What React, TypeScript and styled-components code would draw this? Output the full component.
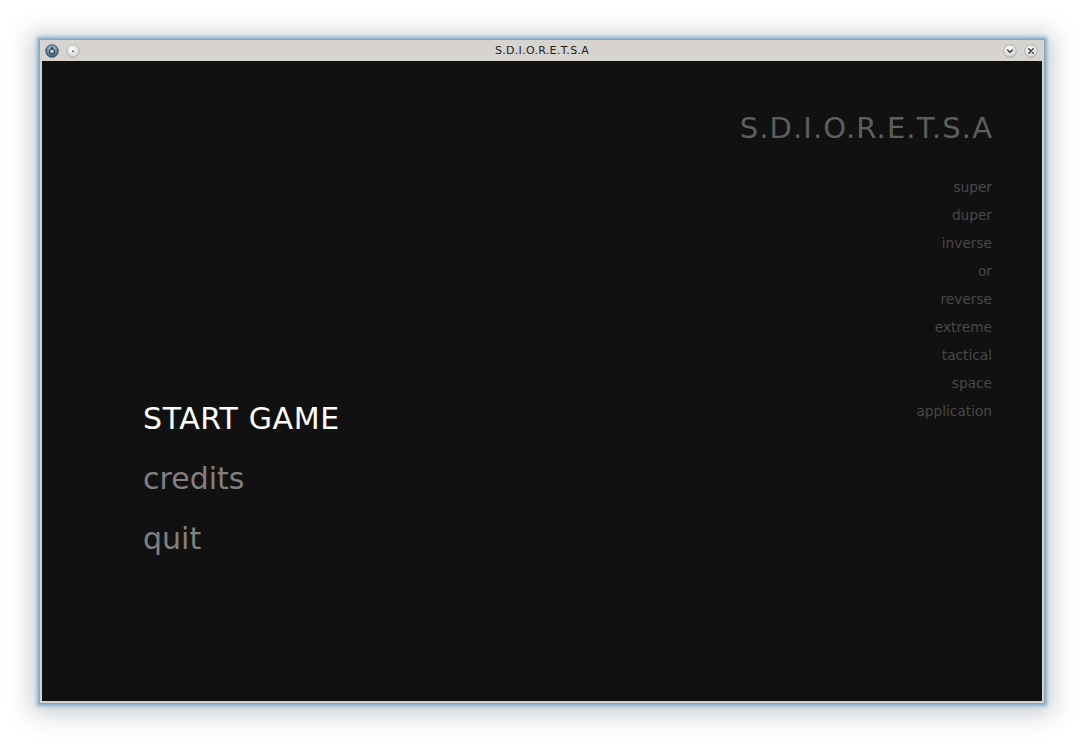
import * as React from 'react';
import styled, { createGlobalStyle } from 'styled-components';

const GlobalStyle = createGlobalStyle`
  html, body {
    margin: 0;
    padding: 0;
    background: #ffffff;
  }
  body {
    font-family: "DejaVu Sans", "Noto Sans", sans-serif;
  }
`;

const subtitleWords = ['super', 'duper', 'inverse', 'or', 'reverse', 'extreme', 'tactical', 'space', 'application'];

const menuItems = [
  { label: 'START GAME', active: true },
  { label: 'credits', active: false },
  { label: 'quit', active: false },
];

const ButtonGradient = () => (
  <defs>
    <radialGradient id="btnGrad" cx="45%" cy="35%" r="70%">
      <stop offset="0%" stopColor="#fbfbfb" />
      <stop offset="70%" stopColor="#dcdcdc" />
      <stop offset="100%" stopColor="#b9b9b9" />
    </radialGradient>
    <radialGradient id="appGrad" cx="50%" cy="40%" r="60%">
      <stop offset="0%" stopColor="#e8eef4" />
      <stop offset="45%" stopColor="#8fa9c2" />
      <stop offset="100%" stopColor="#2e4c6c" />
    </radialGradient>
  </defs>
);

const AppIcon = () => (
  <svg width="14" height="14" viewBox="0 0 14 14">
    <ButtonGradient />
    <circle cx="7" cy="7" r="6.3" fill="url(#appGrad)" stroke="#33506e" strokeWidth="0.8" />
    <circle cx="7" cy="7.6" r="2.6" fill="none" stroke="#3a3f46" strokeWidth="1.2" />
    <rect x="5.6" y="3.3" width="2.8" height="2.2" rx="0.6" fill="#3a3f46" />
  </svg>
);

const RoundButton = ({ glyph }: { glyph: 'dot' | 'down' | 'close' }) => (
  <svg width="14" height="14" viewBox="0 0 14 14">
    <circle cx="7" cy="7" r="6.3" fill="url(#btnGrad)" stroke="#a9a9a9" strokeWidth="0.8" />
    {glyph === 'dot' && <circle cx="7" cy="7.3" r="1" fill="#555" />}
    {glyph === 'down' && (
      <path d="M4.6 6 L7 8.4 L9.4 6" fill="none" stroke="#333" strokeWidth="1.3" strokeLinecap="round" />
    )}
    {glyph === 'close' && (
      <path d="M4.8 4.8 L9.2 9.2 M9.2 4.8 L4.8 9.2" fill="none" stroke="#333" strokeWidth="1.3" strokeLinecap="round" />
    )}
  </svg>
);

export default function App() {
  return (
    <>
      <GlobalStyle />
      <Desktop>
        <Window>
          <TitleBar>
            <ButtonGroup>
              <AppIcon />
              <RoundButton glyph="dot" />
            </ButtonGroup>
            <WindowTitle>S.D.I.O.R.E.T.S.A</WindowTitle>
            <ButtonGroup>
              <RoundButton glyph="down" />
              <RoundButton glyph="close" />
            </ButtonGroup>
          </TitleBar>
          <GameArea>
            <Menu>
              {menuItems.map((item) => (
                <MenuItem key={item.label} active={item.active}>
                  {item.label}
                </MenuItem>
              ))}
            </Menu>
            <Branding>
              <GameTitle>S.D.I.O.R.E.T.S.A</GameTitle>
              <WordList>
                {subtitleWords.map((w) => (
                  <Word key={w}>{w}</Word>
                ))}
              </WordList>
            </Branding>
          </GameArea>
        </Window>
      </Desktop>
    </>
  );
}

const Desktop = styled.div`
  padding: 39px;
  background: #ffffff;
  min-height: 745px;
  box-sizing: border-box;
`;

const Window = styled.div`
  width: 1006px;
  box-sizing: border-box;
  border: 1px solid #7fa8c4;
  background: #d7d3cf;
  padding: 0 2px 2px 2px;
  box-shadow: 0 0 3px 2px rgba(110, 165, 205, 0.8), 0 2px 22px 8px rgba(40, 60, 80, 0.25);
`;

const TitleBar = styled.div`
  height: 21px;
  display: flex;
  align-items: center;
  justify-content: space-between;
  padding: 0 4px 0 3px;
  position: relative;
`;

const ButtonGroup = styled.div`
  display: flex;
  align-items: center;
  gap: 7px;
`;

const WindowTitle = styled.div`
  position: absolute;
  left: 0;
  right: 0;
  text-align: center;
  font-size: 11px;
  letter-spacing: 0.3px;
  color: #1e1e1e;
  pointer-events: none;
`;

const GameArea = styled.div`
  height: 640px;
  background: #111111;
  display: flex;
  justify-content: space-between;
  align-items: flex-start;
`;

const Menu = styled.div`
  display: flex;
  flex-direction: column;
  padding-left: 101px;
  margin-top: 328px;
`;

const MenuItem = styled.div<{ active: boolean }>`
  font-size: 30px;
  line-height: 60px;
  letter-spacing: ${(p) => (p.active ? '0.6px' : '0')};
  color: ${(p) => (p.active ? '#ffffff' : '#808080')};
`;

const Branding = styled.div`
  display: flex;
  flex-direction: column;
  align-items: flex-end;
  padding-right: 50px;
  margin-top: 47px;
`;

const GameTitle = styled.div`
  font-size: 29px;
  line-height: 40px;
  letter-spacing: 1.1px;
  margin-right: -1.1px;
  color: #5e5e5e;
`;

const WordList = styled.div`
  display: flex;
  flex-direction: column;
  align-items: flex-end;
  margin-top: 25px;
`;

const Word = styled.div`
  font-size: 13.7px;
  line-height: 28px;
  color: #484848;
`;
